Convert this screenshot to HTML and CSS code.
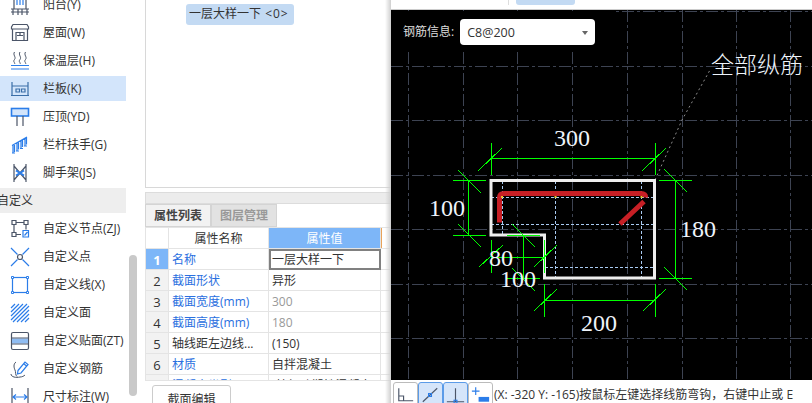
FILE: index.html
```html
<!DOCTYPE html>
<html lang="zh-CN">
<head>
  <meta charset="UTF-8" />
  <title>截面编辑</title>
  <link rel="stylesheet" href="styles.css">
</head>
<body>
  <div class="app">
    <aside class="sidebar">
      <ul class="menu">
        <li class="row">
          <svg class="ico" viewBox="0 0 20 20"><path class="ln" d="M1 17h18M1 14h18M3 14v6M8 14v6M12 14v6M17 14v6M4 14V1h12v13"/><path class="bl" d="M7 4v6M10 4v6M13 4v6"/></svg>
          阳台(Y)
        </li>
        <li class="row">
          <svg class="ico" viewBox="0 0 20 20"><path class="ln" d="M3 1.500h14l1.500 2.500v2h-17V4zM2.500 6v11.500h15V6M6 17.500V9.500h8v8M10 9.500v3M7 12.500h6"/></svg>
          屋面(W)
        </li>
        <li class="row">
          <svg class="ico" viewBox="0 0 20 20"><path class="ln thin" d="M4.500 1c-2 3 2 5 0 7.500s1 3 0 4.500M10 1c-2 3 2 5 0 7.500s1 3 0 4.500M15.500 1c-2 3 2 5 0 7.500s1 3 0 4.500"/><path class="bl" d="M1 14.500h18M1 18h18"/></svg>
          保温层(H)
        </li>
        <li class="row active">
          <svg class="ico" viewBox="0 0 20 20"><path class="st" d="M2 3v13M18 3v13M1 16.500h18M2 7h16"/><path class="st" d="M6 10h3.500v3H6zM11.500 10H15v3h-3.500z"/></svg>
          栏板(K)
        </li>
        <li class="row">
          <svg class="ico" viewBox="0 0 20 20"><rect class="bl fill" x="1.500" y="1.500" width="17" height="7.500"/><path class="ln" d="M7 9v10M13 9v10"/></svg>
          压顶(YD)
        </li>
        <li class="row">
          <svg class="ico" viewBox="0 0 20 20"><path class="bl" d="M2 10.500L17 2M3 10v8M7 8v8M11 5.500v8M15 3v8M2 18h3M6 16h3M10 13.500h3M14 11h3M4.500 10v7M8.500 7.500v7M12.500 5v7M16.500 2.500v7"/></svg>
          栏杆扶手(G)
        </li>
        <li class="row">
          <svg class="ico" viewBox="0 0 20 20"><path class="ln" d="M4 1v18M16 1v18M4 3l12 14M16 3L4 17"/><path class="bl thick" d="M6 7.500l8 5M14 7.500l-8 5"/></svg>
          脚手架(JS)
        </li>
        <li class="row group">自定义</li>
        <li class="row">
          <svg class="ico" viewBox="0 0 20 20"><path class="ln" d="M2 1.500h4v4H2zM14 1.500h4v4h-4zM2 13.500h4v4H2zM6 3.500h8M4 5.500v8M16 5.500v5M6 15.500h5"/><path class="bl" d="M13 11.500h5.500v6.500H13zM14.500 16.500l3-3.500"/></svg>
          自定义节点(ZJ)
        </li>
        <li class="row">
          <svg class="ico" viewBox="0 0 20 20"><path class="bl" d="M1 1l6.500 6.500M12.500 12.500L19 19M19 1l-6.500 6.500M7.500 12.500L1 19"/><circle class="ln" cx="10" cy="10" r="2.500"/></svg>
          自定义点
        </li>
        <li class="row">
          <svg class="ico" viewBox="0 0 20 20"><rect class="bl" x="2.500" y="2.500" width="15" height="15"/><path class="dots" d="M1.500 1.500h2v2h-2zM16.500 1.500h2v2h-2zM1.500 16.500h2v2h-2zM16.500 16.500h2v2h-2z"/></svg>
          自定义线(X)
        </li>
        <li class="row">
          <svg class="ico" viewBox="0 0 20 20"><path class="bl" d="M1 5l4-4M1 9l8-8M1 13L13 1M1 17L17 1M3 19L19 3M7 19L19 7M11 19l8-8M15 19l4-4"/></svg>
          自定义面
        </li>
        <li class="row">
          <svg class="ico" viewBox="0 0 20 20"><rect class="ln" x="1.500" y="1.500" width="17" height="17" rx="1.500"/><path class="band" d="M2 7.500h16v5H2z"/><path class="ln thin" d="M2 7h16M2 13h16"/></svg>
          自定义贴面(ZT)
        </li>
        <li class="row">
          <svg class="ico" viewBox="0 0 20 20"><path class="ln thin" d="M6 3C3 5 4 9 5 11s0 5 2 6.500M1 15c0 3 5 4 9 3 2 0 4-1 5-2"/><path class="bl" d="M8 11.500l7-8.500 3 2.500-7 8.500-3.500 1zM13.500 4.500l3 2.500"/></svg>
          自定义钢筋
        </li>
        <li class="row">
          <svg class="ico" viewBox="0 0 20 20"><path class="ln" d="M2 1v18M18 1v18"/><path class="bl" d="M3 10h14M6 7.500L3 10l3 2.500M14 7.500l3 2.500-3 2.500"/></svg>
          尺寸标注(W)
        </li>
      </ul>
      <div class="scroll-thumb"></div>
    </aside>

    <section class="middle">
      <div class="tree">
        <span class="tree-item">一层大样一下 <small>&lt;0&gt;</small></span>
      </div>
      <div class="split"></div>
      <div class="tabs">
        <span class="tab current">属性列表</span>
        <span class="tab">图层管理</span>
      </div>
      <div class="grid-wrap">
        <table class="props">
          <colgroup><col class="c-no"><col class="c-name"><col class="c-val"><col></colgroup>
          <tr><th></th><th>属性名称</th><th class="sel">属性值</th><th class="rest"></th></tr>
          <tr><td class="no sel">1</td><td class="link">名称</td><td class="edit">一层大样一下</td><td></td></tr>
          <tr><td class="no">2</td><td class="link">截面形状</td><td>异形</td><td></td></tr>
          <tr><td class="no">3</td><td class="link">截面宽度(mm)</td><td class="off">300</td><td></td></tr>
          <tr><td class="no">4</td><td class="link">截面高度(mm)</td><td class="off">180</td><td></td></tr>
          <tr><td class="no">5</td><td>轴线距左边线...</td><td>(150)</td><td></td></tr>
          <tr><td class="no">6</td><td class="link">材质</td><td>自拌混凝土</td><td></td></tr>
          <tr><td class="no">7</td><td class="link">混凝土类型</td><td>(特细砂塑性混凝土)</td><td></td></tr>
        </table>
      </div>
      <div class="actions"><button class="btn">截面编辑</button></div>
    </section>

    <section class="right">
      <div class="topstrip"><i class="sep"></i><span class="pill"></span></div>
      <div class="canvas">
        <svg class="drawing" viewBox="391 10 421 370" width="421" height="370">
          <g class="gridline">
            <path d="M391 11.500H812M391 66.500H812M391 120.500H812M391 175.500H812M391 229.500H812M391 284.500H812M391 338.500H812"/>
            <path d="M408.500 10V380M463.500 10V380M517.500 10V380M572.500 10V380M627.500 10V380M682.500 10V380M736.500 10V380M790.500 10V380"/>
          </g>
          <path class="leader" d="M655 180L682 120L710 70"/>
          <path class="rebar-line" d="M491 197.500H655M491 224.500H655M545 267.500H655M502.500 181V235M555.500 181V278M641.500 181V278"/>
          <path class="outline" d="M491 180.500H654.500V278H544.500V235H491Z"/>
          <g class="dim">
            <path d="M491 158.500H655M491 143V175M655 143V175M478 171L502 148M642 171L666 148"/>
            <path d="M468.500 180.500V235M453 180.500H486M453 235H486M458 170L481 193M458 224L481 247"/>
            <path d="M675.500 180.500V278M659 180.500H692M659 278H692M664 169L687 192M664 267L687 290"/>
            <path d="M523.500 235V278M507 235H540M507 278H540M512 224L535 247M512 268L535 291"/>
            <path d="M491 257.500H544.500M491 240V273M544.500 240V273M479 267L503 245M534 267L557 245"/>
            <path d="M544.500 300.500H655M544.500 284V317M655 284V317M534 311L557 289M643 311L666 289"/>
          </g>
          <path class="bar" d="M499.500 222.500V198Q499.500 193.500 504 193.500H641Q646 193.500 645.500 197.500M644 201.500L620 224"/>
          <path class="pt" d="M501 197h2M554.500 197h2M640.500 197h2"/>
          <text class="lbl" x="572" y="146" text-anchor="middle">300</text>
          <text class="lbl" x="447" y="216" text-anchor="middle">100</text>
          <text class="lbl" x="680" y="237">180</text>
          <text class="lbl" x="489" y="266">80</text>
          <text class="lbl" x="500" y="287">100</text>
          <text class="lbl" x="599" y="331" text-anchor="middle">200</text>
          <text class="note" x="711" y="73">全部纵筋</text>
        </svg>
        <div class="bar-info">
          <label class="info-label" for="barInfo">钢筋信息:</label>
          <div class="fake-select" id="barInfo">C8@200<i class="caret"></i></div>
        </div>
      </div>
      <div class="statusbar">
        <div class="tools">
          <span class="tool">
            <svg viewBox="0 0 24 20"><path class="ln" d="M5 3v13h15M5 11h5v5"/></svg>
          </span>
          <span class="tool on">
            <svg viewBox="0 0 24 20"><path class="ln" d="M4 17L19 3"/><rect class="bl" x="10" y="8.500" width="3" height="3"/></svg>
          </span>
          <span class="tool on">
            <svg viewBox="0 0 24 20"><path class="ln" d="M3 17h18M12 3v14"/><rect class="bl" x="10.500" y="15.500" width="3" height="3"/></svg>
          </span>
          <span class="tool">
            <svg viewBox="0 0 24 20"><path class="bl" d="M3 6h8M7 2v8"/><rect class="solid" x="10" y="12" width="11" height="5"/></svg>
          </span>
        </div>
        <span class="hint">(X: -320 Y: -165)按鼠标左键选择线筋弯钩，右键中止或 E</span>
      </div>
    </section>
  </div>
</body>
</html>
```

FILE: styles.css
```css
* {
  box-sizing: border-box;
}
html, body {
  margin: 0;
  height: 100%;
  overflow: hidden;
  background: #fff;
}
body {
  font-family: "Open Sans", "Noto Sans CJK SC", sans-serif;
  font-size: 12px;
  color: #333;
}
.app {
  display: flex;
  width: 812px;
  height: 403px;
  overflow: hidden;
}

/* icons */
.ln, .bl, .st {
  fill: none;
  stroke-width: 1.2;
}
.ln {
  stroke: #4b5568;
}
.bl {
  stroke: #2b7de9;
}
.st {
  stroke: #3a6ea8;
}
.thin {
  stroke-width: 1;
}
.thick {
  stroke-width: 2;
}
.fill {
  fill: #d3e5fb;
  stroke-width: 1.6;
}
.dots {
  fill: #fff;
  stroke: #2b7de9;
}
.band {
  fill: #8fbcf2;
}
.solid {
  fill: #2b7de9;
}

/* left menu */
.sidebar {
  position: relative;
  flex: 0 0 145px;
  overflow: hidden;
}
.menu {
  list-style: none;
  margin: -8px 0 0;
  padding: 0;
  width: 126px;
  display: flex;
  flex-direction: column;
  gap: 3px;
}
.row {
  display: flex;
  align-items: center;
  gap: 13px;
  height: 25px;
  padding-left: 10px;
  line-height: 23px;
  white-space: nowrap;
}
.ico {
  flex: 0 0 20px;
  width: 20px;
  height: 20px;
}
.row.active {
  background: #d3e5fb;
}
.row.group {
  background: #eee;
  padding-left: 0;
  text-indent: -3px;
}
.scroll-thumb {
  position: absolute;
  left: 129px;
  top: 255px;
  width: 8px;
  height: 141px;
  border-radius: 4px;
  background: #c9c9c9;
}

/* middle panel */
.middle {
  position: relative;
  flex: 0 0 246px;
  min-width: 0;
  display: flex;
  flex-direction: column;
  height: 403px;
}
/* shaded edge against the canvas */
.middle::after {
  content: "";
  position: absolute;
  top: 0;
  right: 0;
  bottom: 0;
  width: 6px;
  background: linear-gradient(to right, rgba(210, 210, 210, 0), #cfcfcf);
}
.tree {
  height: 188px;
  padding: 4px 0 0 40px;
  border-left: 1px solid #d8d8d8;
  border-bottom: 1px solid #d8d8d8;
}
.tree-item {
  display: inline-block;
  width: 108px;
  height: 21px;
  line-height: 20px;
  padding-left: 3px;
  border-radius: 3px;
  background: #c3daf3;
  white-space: nowrap;
}
.tree-item small {
  font-size: 12px;
  letter-spacing: 1px;
  margin-left: 1px;
}
.split {
  height: 12px;
  margin-top: 4px;
  background: #ececec;
  border: 1px solid #dcdcdc;
  border-right: none;
}
.tabs {
  display: flex;
  flex: 0 0 23px;
  background: #fff;
}
.tab {
  width: 66px;
  height: 23px;
  line-height: 21px;
  text-align: center;
  background: #e2e2e2;
  color: #999;
  font-weight: 700;
  border: 1px solid #d4d4d4;
}
.tab.current {
  background: #f2f2f2;
  color: #444;
}
.grid-wrap {
  flex: 0 0 153px;
  overflow: hidden;
}
.props {
  width: 100%;
  table-layout: fixed;
  border-collapse: collapse;
}
.c-no {
  width: 23px;
}
.c-name {
  width: 100px;
}
.c-val {
  width: 112px;
}
.props th, .props td {
  height: 21px;
  padding: 1px 3px 0;
  border: 1px solid #e4e4e4;
  font-weight: 400;
  line-height: 18px;
  white-space: nowrap;
  overflow: hidden;
  font-size: 12px;
}
.props th {
  text-align: center;
}
.props th.sel {
  background: #7db6f8;
  color: #fff;
}
.props td.no {
  background: #f2f2f2;
  text-align: center;
  font-size: 13px;
}
.props td.no.sel {
  background: #7db6f8;
  color: #fff;
  font-weight: 700;
}
.link {
  color: #2a6fe0;
}
.off {
  color: #999;
}
.props td.edit {
  outline: 2px solid #808080;
  outline-offset: -2px;
}
.props th.rest {
  box-shadow: inset 2px 0 0 -1px #e9a35a;
}
.actions {
  flex: 1;
  padding: 4px 0 0 7px;
  overflow: hidden;
  border-top: 1px solid #e4e4e4;
}
.btn {
  width: 79px;
  height: 26px;
  padding: 1px 0 0;
  background: #fff;
  border: 1px solid #ccc;
  border-radius: 3px;
  font: inherit;
  color: #333;
}

/* right panel */
.right {
  flex: 1;
  display: flex;
  flex-direction: column;
  min-width: 0;
}
.topstrip {
  display: flex;
  height: 10px;
  padding-left: 117px;
  background: #fff;
  border-bottom: 1px solid #ccc;
}
.sep {
  width: 1px;
  height: 5px;
  background: #ddd;
}
.pill {
  width: 59px;
  height: 5px;
  margin-left: 7px;
  background: #c3daf3;
  border-radius: 0 0 3px 3px;
}
.canvas {
  position: relative;
  height: 370px;
  background: #000;
  overflow: hidden;
}
.drawing {
  display: block;
}
.gridline {
  fill: none;
  stroke: #3d4352;
  stroke-dasharray: 12 3 3 3;
  shape-rendering: crispEdges;
}
.leader {
  fill: none;
  stroke: #8c8c8c;
  stroke-dasharray: 2 3;
}
.rebar-line {
  fill: none;
  stroke: #a9cbf2;
  stroke-dasharray: 3 2;
  shape-rendering: crispEdges;
}
.outline {
  fill: none;
  stroke: #eee;
  stroke-width: 3;
}
.dim {
  fill: none;
  stroke: #0f0;
  shape-rendering: crispEdges;
}
.bar {
  fill: none;
  stroke: #c71f25;
  stroke-width: 5;
}
.pt {
  stroke: #e6c229;
  stroke-width: 2;
}
.lbl {
  font-family: "Liberation Serif", serif;
  font-size: 24px;
  fill: #eef4fb;
}
.note {
  font-family: "Noto Sans CJK SC", sans-serif;
  font-weight: 300;
  font-size: 23px;
  fill: #eef4fb;
}
.bar-info {
  position: absolute;
  left: 0;
  top: 1px;
  width: 222px;
  height: 39px;
  display: flex;
  align-items: center;
  gap: 6px;
  padding: 3px 0 0 12px;
  background: #000;
}
.info-label {
  color: #ddd;
  line-height: 30px;
}
.fake-select {
  position: relative;
  width: 135px;
  height: 26px;
  line-height: 27px;
  padding-left: 7px;
  background: #fff;
  border-radius: 4px;
  font-size: 12.5px;
  color: #333;
}
.caret {
  position: absolute;
  right: 7px;
  top: 12px;
  border: 3px solid transparent;
  border-top: 4px solid #666;
  border-bottom: none;
}
.statusbar {
  display: flex;
  align-items: flex-start;
  flex: 1;
  padding: 2px 0 0 2px;
  background: #fff;
  white-space: nowrap;
  overflow: hidden;
}
.tools {
  display: flex;
}
.tool {
  flex: 0 0 25px;
  height: 24px;
  padding-top: 2px;
  border: 1px solid #bbb;
  border-radius: 3px;
}
.tool.on {
  background: #d5e5fa;
  border-color: #5b9be8;
}
.tool svg {
  display: block;
  width: 23px;
  height: 20px;
}
.hint {
  margin-left: 1px;
  line-height: 25px;
  color: #333;
}
```
